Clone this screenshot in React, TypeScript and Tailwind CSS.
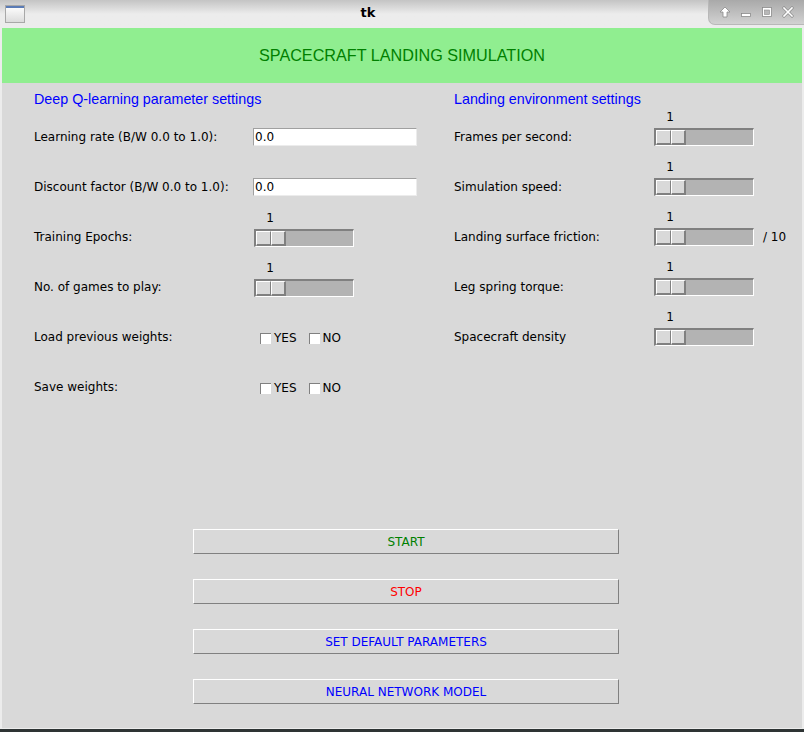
const label = "font-['DejaVu_Sans',sans-serif] text-[12px] text-black";

const leftRows = [
  { name: 'Learning rate (B/W 0.0 to 1.0):', kind: 'entry' },
  { name: 'Discount factor (B/W 0.0 to 1.0):', kind: 'entry' },
  { name: 'Training Epochs:', kind: 'scale' },
  { name: 'No. of games to play:', kind: 'scale' },
  { name: 'Load previous weights:', kind: 'check' },
  { name: 'Save weights:', kind: 'check' },
];

const rightRows = [
  'Frames per second:',
  'Simulation speed:',
  'Landing surface friction:',
  'Leg spring torque:',
  'Spacecraft density',
];

const buttons = [
  { text: 'START', color: 'text-[#008000]' },
  { text: 'STOP', color: 'text-[#ff0000]' },
  { text: 'SET DEFAULT PARAMETERS', color: 'text-[#0000ff]' },
  { text: 'NEURAL NETWORK MODEL', color: 'text-[#0000ff]' },
];

function Entry() {
  return (
    <div className="w-[164px] h-[18px] bg-white border-t border-l border-[#a0a0a0] border-b border-r border-b-[#ececec] border-r-[#ececec] flex items-center pl-[1px]">
      <span className={label}>0.0</span>
    </div>
  );
}

function Scale() {
  return (
    <div className="relative w-[100px] h-[18px] bg-[#b3b3b3] border-t-2 border-l-2 border-[#808080] border-b border-r border-b-white border-r-white flex">
      <span className={`${label} absolute -top-[20px] left-[14px] -translate-x-1/2 leading-[14px]`}>1</span>
      <div className="w-[15px] h-[15px] bg-[#d9d9d9] border-t border-l border-white border-b-2 border-r border-b-[#808080] border-r-[#808080]" />
      <div className="w-[15px] h-[15px] bg-[#d9d9d9] border-t border-l border-white border-b-2 border-r-2 border-b-[#808080] border-r-[#808080]" />
    </div>
  );
}

function Check({ text }: { text: string }) {
  return (
    <div className="flex items-center">
      <div className="w-[11px] h-[11px] bg-white border-t border-l border-[#808080]" />
      <span className={`${label} ml-[3px]`}>{text}</span>
    </div>
  );
}

function TitleBar() {
  return (
    <div className="h-[28px] flex bg-gradient-to-b from-[#c4c4c4] via-[#ececec] to-[#ececec]">
      <div className="pl-[5px] pt-[5px]">
        <div className="w-[20px] h-[18px] border border-[#a8a8a8] bg-gradient-to-b from-white to-[#dcdcdc]">
          <div className="h-[2px] bg-[#5a7bb5]" />
        </div>
      </div>
      <div className="flex-1 flex justify-center pt-[5px] pl-[3px]">
        <span className="font-['DejaVu_Sans',sans-serif] font-bold text-[13px] text-black leading-[16px]">tk</span>
      </div>
      <div className="w-[96px] h-[25px] rounded-bl-[7px] bg-gradient-to-b from-[#a9a9a9] to-[#d2d2d2] border-l border-b border-[#b8b8b8] flex items-center justify-around px-[6px]">
        <svg width="12" height="12" viewBox="0 0 12 12">
          <path d="M6 1 L11 6 L8 6 L8 11 L4 11 L4 6 L1 6 Z" fill="#fff" stroke="#8a8a8a" strokeWidth="0.8" />
        </svg>
        <svg width="12" height="12" viewBox="0 0 12 12">
          <rect x="1.5" y="7.5" width="9" height="3" fill="#fff" stroke="#8a8a8a" strokeWidth="0.8" />
        </svg>
        <svg width="12" height="12" viewBox="0 0 12 12">
          <rect x="1.5" y="1.5" width="9" height="9" fill="#fff" stroke="#8a8a8a" strokeWidth="0.8" />
          <rect x="3.5" y="4" width="5" height="4.5" fill="#b8b8b8" stroke="#8a8a8a" strokeWidth="0.6" />
        </svg>
        <svg width="12" height="12" viewBox="0 0 12 12">
          <path d="M2 2 L10 10 M10 2 L2 10" stroke="#8a8a8a" strokeWidth="3" strokeLinecap="square" />
          <path d="M2 2 L10 10 M10 2 L2 10" stroke="#fff" strokeWidth="1.6" strokeLinecap="square" />
        </svg>
      </div>
    </div>
  );
}

export default function App() {
  return (
    <div className="w-[804px] h-[732px] bg-[#ececec] flex flex-col overflow-hidden">
      <TitleBar />
      <div className="mx-[2px] flex-1 bg-[#d9d9d9] flex flex-col">
        <div className="h-[55px] bg-[#90ee90] flex items-center justify-center">
          <span className="font-['Liberation_Sans',sans-serif] text-[16.2px] text-[#008000]">
            SPACECRAFT LANDING SIMULATION
          </span>
        </div>

        <div className="flex pl-[32px]">
          <div className="w-[420px]">
            <div className="h-[29px] pt-[3px]">
              <span className="font-['Liberation_Sans',sans-serif] text-[14.3px] leading-[20px] text-[#0000ff]">
                Deep Q-learning parameter settings
              </span>
            </div>
            {leftRows.map((row) => (
              <div key={row.name} className="h-[50px] flex items-center">
                <div className={`${label} w-[219px]`}>{row.name}</div>
                {row.kind === 'entry' && <Entry />}
                {row.kind === 'scale' && <div className="pl-[1px] pt-[2px]"><Scale /></div>}
                {row.kind === 'check' && (
                  <div className="flex gap-[12px] pl-[7px] pt-[2px]">
                    <Check text="YES" />
                    <Check text="NO" />
                  </div>
                )}
              </div>
            ))}
          </div>

          <div className="flex-1">
            <div className="h-[29px] pt-[3px]">
              <span className="font-['Liberation_Sans',sans-serif] text-[14.3px] leading-[20px] text-[#0000ff]">
                Landing environment settings
              </span>
            </div>
            {rightRows.map((name) => (
              <div key={name} className="h-[50px] flex items-center">
                <div className={`${label} w-[200px]`}>{name}</div>
                <div><Scale /></div>
                {name === 'Landing surface friction:' && (
                  <span className={`${label} ml-[9px]`}>/ 10</span>
                )}
              </div>
            ))}
          </div>
        </div>

        <div className="flex flex-col gap-[25px] pl-[191px] mt-[117px]">
          {buttons.map((b) => (
            <div
              key={b.text}
              className="w-[426px] h-[25px] bg-[#d9d9d9] border-t border-l border-white border-b border-r border-b-[#808080] border-r-[#808080] flex items-center justify-center"
            >
              <span className={`font-['DejaVu_Sans',sans-serif] text-[12px] ${b.color}`}>{b.text}</span>
            </div>
          ))}
        </div>
      </div>
      <div className="h-[1px] bg-[#ececec]" />
      <div className="h-[3px] bg-[#2e3434]" />
    </div>
  );
}
